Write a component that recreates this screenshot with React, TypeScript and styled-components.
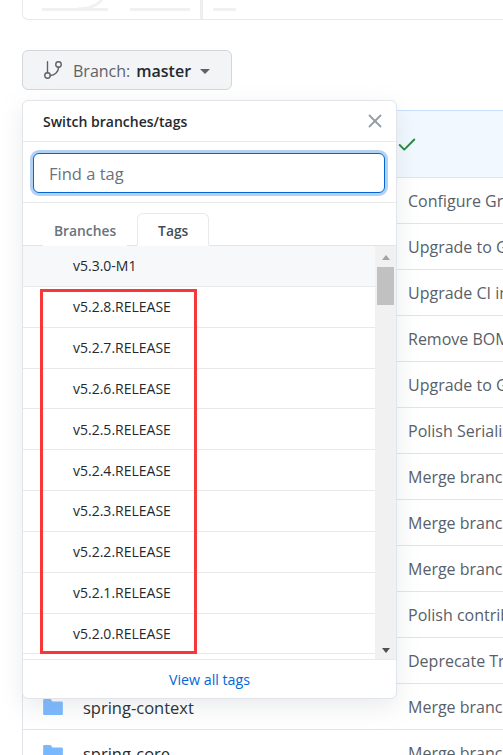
import styled, { createGlobalStyle } from 'styled-components';
import { GitBranch, X, Check } from 'lucide-react';

const GlobalStyle = createGlobalStyle`
    html, body {
        margin: 0;
        height: 100%;
        overflow: hidden;
        background: #fff;
        font-family: "Open Sans", "Noto Sans", sans-serif;
    }
`;

const Page = styled.div`
    position: relative;
    width: 503px;
    height: 755px;
    overflow: hidden;
    padding-left: 22px;
    box-sizing: border-box;
`;

const TopBox = styled.div`
    position: relative;
    width: 520px;
    height: 20px;
    box-sizing: border-box;
    border: 1px solid #e8e9eb;
    border-top: 0;
    border-radius: 0 0 6px 6px;
    margin-bottom: 30px;
    display: flex;
    align-items: flex-start;
    padding: 8px 0 0 19px;
`;

const SkeletonLine = styled.span<{ $w: number; $gap: number }>`
    width: ${p => p.$w}px;
    height: 3px;
    margin-right: ${p => p.$gap}px;
    background: #f1f1f2;
`;

const SkeletonDivider = styled.span`
    width: 3px;
    height: 19px;
    margin: -8px 10px 0 0;
    background: #eeeeef;
`;

const SkeletonArc = styled.svg`
    position: absolute;
    left: 55px;
    top: 0;
`;

const BranchButton = styled.div`
    width: 210px;
    height: 40px;
    box-sizing: border-box;
    display: flex;
    align-items: center;
    padding: 1px 0 0 19px;
    border: 1px solid #d5d6d9;
    border-radius: 6px;
    background: #f3f4f6;
    color: #5d6269;
    font-size: 16px;
    margin-bottom: 20px;
    svg {
        margin: -1px 9px 0 0;
    }
`;

const BranchName = styled.b`
    color: #24292e;
    font-weight: 600;
    margin-left: 6px;
`;

const Caret = styled.span`
    width: 0;
    height: 0;
    margin-left: 9px;
    margin-top: 2px;
    border: 5px solid transparent;
    border-top-color: #5d6269;
    border-bottom: 0;
`;

const Table = styled.div`
    width: 520px;
    border-left: 1px solid #e1e4e8;
`;

const TableHead = styled.div`
    height: 68px;
    box-sizing: border-box;
    background: #f1f8ff;
    border-top: 1px solid #c8e1ff;
    border-bottom: 1px solid #e1e4e8;
    padding: 23px 0 0 373px;
    color: #22863a;
    display: flex;
`;

const Row = styled.div`
    height: 46px;
    box-sizing: border-box;
    padding-top: 1px;
    border-bottom: 1px solid #e1e4e8;
    display: flex;
    align-items: center;
    font-size: 16px;
    color: #586069;
    white-space: nowrap;
`;

const FileCell = styled.div`
    width: 385px;
    flex: none;
    display: flex;
    align-items: center;
    padding-left: 20px;
    box-sizing: border-box;
    color: #24292e;
`;

const FileName = styled.span`
    margin-left: 20px;
    font-size: 16.5px;
`;

const CommitCell = styled.span`
    margin-left: 385px;
`;

const Dropdown = styled.div`
    position: absolute;
    left: 22px;
    top: 100px;
    width: 375px;
    height: 599px;
    box-sizing: border-box;
    background: #fff;
    border: 1px solid #e1e4e8;
    border-radius: 6px;
    box-shadow: 0 8px 24px rgba(149, 157, 165, 0.2);
    display: flex;
    flex-direction: column;
    overflow: hidden;
`;

const DropHeader = styled.div`
    height: 41px;
    flex: none;
    box-sizing: border-box;
    border-bottom: 1px solid #e8e9eb;
    display: flex;
    align-items: center;
    justify-content: space-between;
    padding: 0 10px 0 20px;
    font-size: 14px;
    font-weight: 600;
    color: #24292e;
    svg {
        color: #959da5;
    }
`;

const FilterBar = styled.div`
    height: 61px;
    flex: none;
    box-sizing: border-box;
    border-bottom: 1px solid #e8e9eb;
    padding: 11px 11px 0 10px;
`;

const FilterInput = styled.input`
    width: 100%;
    height: 40px;
    box-sizing: border-box;
    border: 1px solid #0366d6;
    border-radius: 6px;
    box-shadow: 0 0 0 3px rgba(3, 102, 214, 0.3);
    outline: 0;
    padding: 0 15px;
    font: inherit;
    font-size: 16.5px;
    color: #24292e;
    &::placeholder {
        color: #6a737d;
        opacity: 1;
    }
`;

const Tabs = styled.div`
    height: 43px;
    flex: none;
    box-sizing: border-box;
    display: flex;
    align-items: flex-end;
    gap: 10px;
    padding-left: 20px;
    border-bottom: 1px solid #e1e4e8;
`;

const Tab = styled.div<{ $active?: boolean }>`
    height: 33px;
    box-sizing: border-box;
    margin-bottom: -1px;
    padding: 2px ${p => (p.$active ? 20 : 10)}px 0;
    display: flex;
    align-items: center;
    font-size: 13.8px;
    font-weight: 600;
    color: ${p => (p.$active ? '#444d56' : '#6a737d')};
    background: #fff;
    border: 1px solid ${p => (p.$active ? '#e8e9eb' : 'transparent')};
    border-bottom-color: ${p => (p.$active ? '#fff' : 'transparent')};
    border-radius: 6px 6px 0 0;
`;

const ListWrap = styled.div`
    height: 413px;
    flex: none;
    display: flex;
`;

const TagList = styled.div`
    flex: 1;
    overflow: hidden;
`;

const TagRow = styled.div<{ $hover?: boolean }>`
    height: 40.85px;
    box-sizing: border-box;
    display: flex;
    align-items: center;
    padding-left: 50px;
    font-size: 14px;
    color: #24292e;
    background: ${p => (p.$hover ? '#f6f8fa' : '#fff')};
    border-bottom: 1px solid #e8e9eb;
`;

const ScrollTrack = styled.div`
    width: 21px;
    flex: none;
    background: #f1f1f1;
    display: flex;
    flex-direction: column;
    align-items: center;
`;

const ScrollArrow = styled.span<{ $down?: boolean }>`
    width: 0;
    height: 0;
    flex: none;
    border: 4.5px solid transparent;
    ${p => (p.$down
        ? 'border-bottom: 0; border-top: 5px solid #505050; margin: auto 0 6px;'
        : 'border-top: 0; border-bottom: 5px solid #a3a3a3; margin: 9px 0 7px;')}
`;

const ScrollThumb = styled.span`
    width: 17px;
    height: 38px;
    flex: none;
    background: #c1c1c1;
`;

const DropFooter = styled.a`
    flex: 1;
    display: flex;
    align-items: center;
    justify-content: center;
    border-top: 1px solid #e8e9eb;
    font-size: 14.2px;
    color: #0366d6;
`;

const Highlight = styled.div`
    position: absolute;
    left: 40px;
    top: 289px;
    width: 157px;
    height: 365px;
    box-sizing: border-box;
    border: 3px solid #f83838;
    pointer-events: none;
`;

const FolderIcon = () => (
    <svg width="20" height="16" viewBox="0 0 16 13" fill="#79b8ff">
        <path d="M1 0h4.6c.4 0 .7.2.9.5L7.5 2H15a1 1 0 0 1 1 1v9a1 1 0 0 1-1 1H1a1 1 0 0 1-1-1V1a1 1 0 0 1 1-1z" />
    </svg>
);

const commits = [
    'Configure Gradle',
    'Upgrade to Gradle',
    'Upgrade CI image',
    'Remove BOM',
    'Upgrade to Gradle',
    'Polish Serialization',
    'Merge branch',
    'Merge branch',
    'Merge branch',
    'Polish contribution',
    'Deprecate Transaction',
];

const folders = [
    { name: 'spring-context', msg: 'Merge branch' },
    { name: 'spring-core', msg: 'Merge branch' },
];

const tags = ['v5.2.8', 'v5.2.7', 'v5.2.6', 'v5.2.5', 'v5.2.4', 'v5.2.3', 'v5.2.2', 'v5.2.1', 'v5.2.0'];

const App = () => {
    return <>
        <GlobalStyle />
        <Page>
            <TopBox>
                <SkeletonArc width="28" height="10" viewBox="0 0 28 10" fill="none">
                    <path d="M0 9c10 0 18-3 24-9" stroke="#f1f1f2" strokeWidth="3" />
                </SkeletonArc>
                <SkeletonLine $w={66} $gap={22} />
                <SkeletonLine $w={60} $gap={10} />
                <SkeletonDivider />
                <SkeletonLine $w={23} $gap={0} />
            </TopBox>
            <BranchButton>
                <GitBranch size={22} strokeWidth={1.5} />
                Branch:<BranchName>master</BranchName>
                <Caret />
            </BranchButton>
            <Table>
                <TableHead>
                    <Check size={22} strokeWidth={2} />
                </TableHead>
                {commits.map((c, i) => (
                    <Row key={i}><CommitCell>{c}</CommitCell></Row>
                ))}
                {folders.map(f => (
                    <Row key={f.name}>
                        <FileCell>
                            <FolderIcon />
                            <FileName>{f.name}</FileName>
                        </FileCell>
                        {f.msg}
                    </Row>
                ))}
            </Table>
            <Dropdown>
                <DropHeader>
                    Switch branches/tags
                    <X size={22} strokeWidth={2} />
                </DropHeader>
                <FilterBar>
                    <FilterInput placeholder="Find a tag" />
                </FilterBar>
                <Tabs>
                    <Tab>Branches</Tab>
                    <Tab $active>Tags</Tab>
                </Tabs>
                <ListWrap>
                    <TagList>
                        <TagRow $hover>v5.3.0-M1</TagRow>
                        {tags.map(t => (
                            <TagRow key={t}>{t}.RELEASE</TagRow>
                        ))}
                    </TagList>
                    <ScrollTrack>
                        <ScrollArrow />
                        <ScrollThumb />
                        <ScrollArrow $down />
                    </ScrollTrack>
                </ListWrap>
                <DropFooter>View all tags</DropFooter>
            </Dropdown>
            <Highlight />
        </Page>
    </>;
};

export default App;
